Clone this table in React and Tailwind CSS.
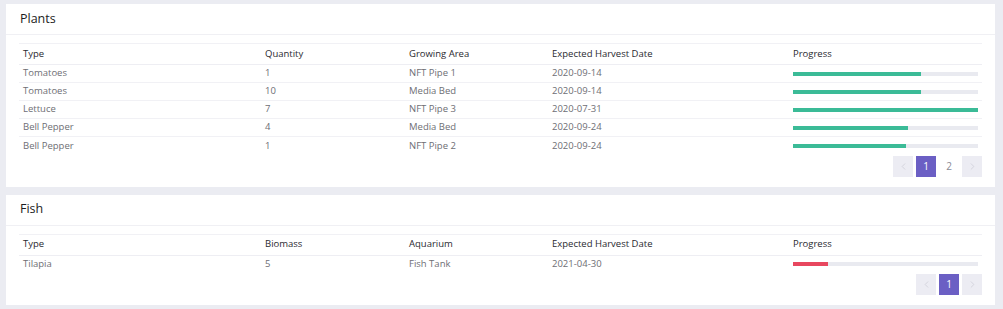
import { ChevronLeft, ChevronRight } from 'lucide-react'

const plants = [
  { type: 'Tomatoes', qty: '1', area: 'NFT Pipe 1', date: '2020-09-14', pct: 69 },
  { type: 'Tomatoes', qty: '10', area: 'Media Bed', date: '2020-09-14', pct: 69 },
  { type: 'Lettuce', qty: '7', area: 'NFT Pipe 3', date: '2020-07-31', pct: 100 },
  { type: 'Bell Pepper', qty: '4', area: 'Media Bed', date: '2020-09-24', pct: 62 },
  { type: 'Bell Pepper', qty: '1', area: 'NFT Pipe 2', date: '2020-09-24', pct: 61 },
]

const fish = [
  { type: 'Tilapia', qty: '5', area: 'Fish Tank', date: '2021-04-30', pct: 19 },
]

function Progress({ pct, color }) {
  return (
    <div className="h-[4px] w-[185px] bg-[#e9eaf0]">
      <div className={`h-full ${color}`} style={{ width: `${pct}%` }} />
    </div>
  )
}

function Pager({ pages }) {
  return (
    <div className="flex justify-end items-center gap-[3px] mt-[1px]">
      <button className="w-[20px] h-[21px] flex items-center justify-center bg-[#ececf3] text-[#c9c9d4]">
        <ChevronLeft size={11} strokeWidth={1.5} />
      </button>
      {pages.map((p) => (
        <button
          key={p}
          className={`h-[21px] flex items-center justify-center text-[10px] ${
            p === 1 ? 'w-[20px] bg-[#6b5fc4] text-white' : 'w-[20px] text-[#8a8a96]'
          }`}
        >
          {p}
        </button>
      ))}
      <button className="w-[20px] h-[21px] flex items-center justify-center bg-[#ececf3] text-[#c9c9d4]">
        <ChevronRight size={11} strokeWidth={1.5} />
      </button>
    </div>
  )
}

function Card({ title, cols, rows, pages, barColor }) {
  return (
    <div className="ml-[6px] mr-[8px] bg-white">
      <div className="h-[31px] flex items-center px-[14px] border-b border-[#f0f0f4]">
        <h2 className="text-[12.5px] font-medium text-[#1c1c22]">{title}</h2>
      </div>
      <div className="px-[13px] pt-[8px] pb-[10px]">
        <table className="w-full table-fixed border-collapse border-t border-[#f1f1f5]">
          <thead>
            <tr className="h-[21px] border-b border-[#eeeef3]">
              {cols.map((c, i) => (
                <th
                  key={c}
                  className={`text-left font-medium text-[9.5px] text-[#2a2a30] px-[4px] ${
                    ['w-[242px]', 'w-[144px]', 'w-[143px]', 'w-[241px]', ''][i]
                  }`}
                >
                  {c}
                </th>
              ))}
            </tr>
          </thead>
          <tbody>
            {rows.map((r, i) => (
              <tr key={i} className={`h-[18px] ${i < rows.length - 1 ? 'border-b border-[#f1f1f5]' : ''}`}>
                <td className="px-[4px] text-[9.5px] text-[#6e6e74]">{r.type}</td>
                <td className="px-[4px] text-[9.5px] text-[#6e6e74]">{r.qty}</td>
                <td className="px-[4px] text-[9.5px] text-[#6e6e74]">{r.area}</td>
                <td className="px-[4px] text-[9.5px] text-[#6e6e74]">{r.date}</td>
                <td className="px-[4px]">
                  <Progress pct={r.pct} color={barColor} />
                </td>
              </tr>
            ))}
          </tbody>
        </table>
        <Pager pages={pages} />
      </div>
    </div>
  )
}

export default function App() {
  return (
    <div
      className="w-[1003px] h-[309px] bg-[#ebecf2] pt-[4px] flex flex-col gap-[8px]"
      style={{ fontFamily: '"Open Sans", "Noto Sans", sans-serif' }}
    >
      <Card
        title="Plants"
        cols={['Type', 'Quantity', 'Growing Area', 'Expected Harvest Date', 'Progress']}
        rows={plants}
        pages={[1, 2]}
        barColor="bg-[#3bbb97]"
      />
      <Card
        title="Fish"
        cols={['Type', 'Biomass', 'Aquarium', 'Expected Harvest Date', 'Progress']}
        rows={fish}
        pages={[1]}
        barColor="bg-[#e8475f]"
      />
    </div>
  )
}
